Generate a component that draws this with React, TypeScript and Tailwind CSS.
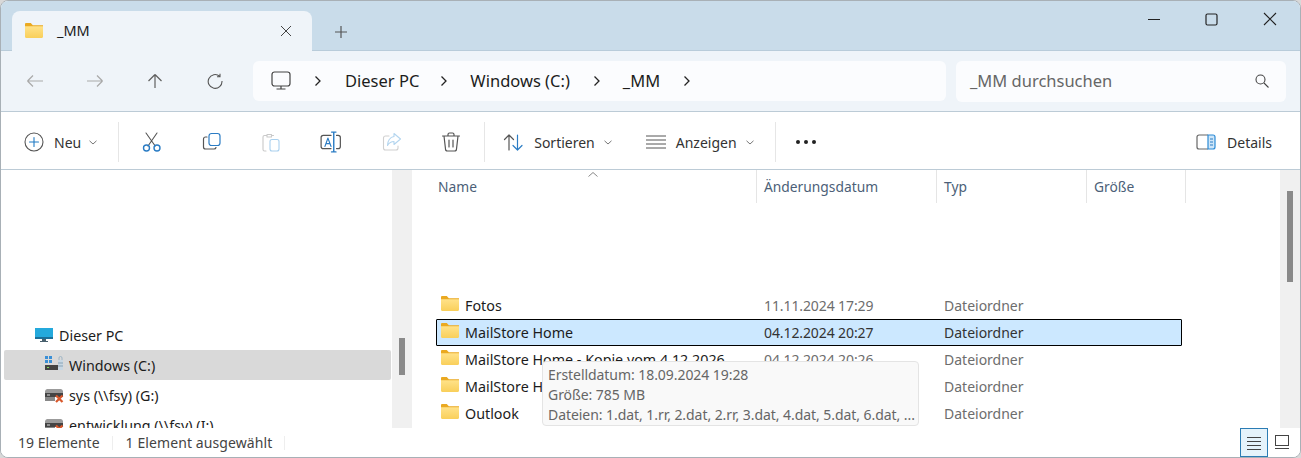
import type { ReactNode } from "react";

type FileRow = {
  name: string;
  date: string;
  selected?: boolean;
};

const files: FileRow[] = [
  { name: "Fotos", date: "11.11.2024 17:29" },
  { name: "MailStore Home", date: "04.12.2024 20:27", selected: true },
  { name: "MailStore Home - Kopie vom 4.12.2026", date: "04.12.2024 20:26" },
  { name: "MailStore Home", date: "" },
  { name: "Outlook", date: "" },
];

const grid = "grid grid-cols-[320px_180px_150px_100px]";

function Svg({ size, className, children }: { size: number; className?: string; children: ReactNode }) {
  return (
    <svg width={size} height={size} viewBox="0 0 20 20" fill="none" strokeWidth="1.1" strokeLinecap="round" strokeLinejoin="round" className={`shrink-0 ${className ?? ""}`}>
      {children}
    </svg>
  );
}

function Folder({ className }: { className?: string }) {
  return (
    <svg width="18" height="15" viewBox="0 0 18 15" className={`shrink-0 ${className ?? ""}`}>
      <defs>
        <linearGradient id="folderBody" x1="0" y1="0" x2="0" y2="1">
          <stop offset="0" stopColor="#ffe289" />
          <stop offset="1" stopColor="#f9cf5a" />
        </linearGradient>
      </defs>
      <path d="M0 1.200C0 .500.500 0 1.200 0h4.600l2 2.200H18V4H0z" fill="#eaa921" />
      <path d="M0 3.200h18v10.600c0 .700-.500 1.200-1.200 1.200H1.200C.500 15 0 14.500 0 13.800z" fill="url(#folderBody)" />
    </svg>
  );
}

function Chevron() {
  return (
    <svg width="8" height="12" viewBox="0 0 8 12" fill="none" stroke="#222" strokeWidth="1.3" className="shrink-0">
      <path d="M1.500 1.500 6 6l-4.500 4.500" />
    </svg>
  );
}

function Caret() {
  return (
    <svg width="8" height="5" viewBox="0 0 8 5" fill="none" stroke="#777" strokeWidth="1" className="shrink-0">
      <path d="M.500.800 4 4 7.500.800" />
    </svg>
  );
}

function Divider() {
  return <div className="h-[40px] w-px bg-[#e6e6e6] shrink-0" />;
}

function TitleBar() {
  return (
    <div className="h-[50px] shrink-0 bg-[#c9dcea] border-b border-[#b9ccda] flex items-end pl-[11px]">
      <div className="w-[300px] h-[40px] bg-[#eff4f9] rounded-t-[8px] flex items-center pl-[13px] pr-[20px] pb-[1px] mb-[-1px] text-[14.500px] text-[#1c1c1c]">
        <Folder />
        <span className="ml-[14px]">_MM</span>
        <svg width="12" height="12" viewBox="0 0 12 12" stroke="#444" strokeWidth="1" className="ml-auto">
          <path d="M1 1l10 10M11 1 1 11" />
        </svg>
      </div>
      <svg width="14" height="14" viewBox="0 0 14 14" stroke="#555" strokeWidth="1.200" className="ml-[22px] mb-[11px]">
        <path d="M7 1v12M1 7h12" />
      </svg>
      <div className="ml-auto flex items-center h-[49px] self-start pr-[23px] pb-[13px]">
        <svg width="14" height="14" viewBox="0 0 14 14" stroke="#222" strokeWidth="1.100">
          <path d="M1 7.500h12" />
        </svg>
        <svg width="13" height="13" viewBox="0 0 13 13" fill="none" stroke="#222" strokeWidth="1.200" className="ml-[44px]">
          <rect x="1" y="1" width="11" height="11" rx="1.500" />
        </svg>
        <svg width="14" height="14" viewBox="0 0 14 14" stroke="#222" strokeWidth="1.100" className="ml-[45px]">
          <path d="M1 1l12 12M13 1 1 13" />
        </svg>
      </div>
    </div>
  );
}

function AddressBar() {
  return (
    <div className="h-[61px] shrink-0 bg-[#eff4f9] border-b border-[#bccbd6] flex items-center pl-[25px] pr-[14px]">
      <svg width="18" height="14" viewBox="0 0 18 14" fill="none" stroke="#a9a9a9" strokeWidth="1.200">
        <path d="M17 7H1.500M1.500 7l5.500-5.500M1.500 7 7 12.500" />
      </svg>
      <svg width="18" height="14" viewBox="0 0 18 14" fill="none" stroke="#a9a9a9" strokeWidth="1.200" className="ml-[42px]">
        <path d="M1 7h15.500M16.500 7 11 1.500M16.500 7 11 12.500" />
      </svg>
      <svg width="16" height="16" viewBox="0 0 16 16" fill="none" stroke="#5f5f5f" strokeWidth="1.200" className="ml-[43px]">
        <path d="M8 15V1.500M8 1.500 1.500 8M8 1.500 14.500 8" />
      </svg>
      <svg width="16" height="16" viewBox="0 0 16 16" fill="none" stroke="#555" strokeWidth="1.100" className="ml-[44px]">
        <path d="M12.600 3.200A6.900 6.900 0 1 0 15 8M13 .800v3h-3" />
      </svg>
      <div className="ml-[30px] w-[693px] h-[40px] bg-[#fbfcfe] rounded-[6px] flex items-center pl-[18px] text-[16.500px] text-[#1c1c1c]">
        <svg width="20" height="20" viewBox="0 0 20 20" fill="none" stroke="#444" strokeWidth="1.200">
          <rect x="1" y="1" width="18" height="14" rx="2.500" />
          <path d="M10 15v3M5.500 18h9" />
        </svg>
        <span className="ml-[23px]"><Chevron /></span>
        <span className="ml-[23px]">Dieser PC</span>
        <span className="ml-[21px]"><Chevron /></span>
        <span className="ml-[22px]">Windows (C:)</span>
        <span className="ml-[23px]"><Chevron /></span>
        <span className="ml-[22px]">_MM</span>
        <span className="ml-[23px]"><Chevron /></span>
      </div>
      <div className="ml-[10px] flex-1 h-[41px] bg-[#fbfcfe] rounded-[6px] flex items-center pl-[14px] pr-[17px] text-[16.500px] text-[#666]">
        <span>_MM durchsuchen</span>
        <svg width="14" height="14" viewBox="0 0 14 14" fill="none" stroke="#444" strokeWidth="1.100" className="ml-auto">
          <circle cx="5.500" cy="5.500" r="4.500" />
          <path d="M9 9l4.500 4.500" />
        </svg>
      </div>
    </div>
  );
}

function Toolbar() {
  return (
    <div className="h-[58px] shrink-0 bg-white border-b border-[#bccbd6] flex items-center pl-[23px] pr-[28px] pt-[3px] text-[14px] text-[#333]">
      <Svg size={20}>
        <circle cx="10" cy="10" r="9" stroke="#555" />
        <path d="M10 5.500v9M5.500 10h9" stroke="#1f7ac4" />
      </Svg>
      <span className="ml-[10px]">Neu</span>
      <span className="ml-[8px]"><Caret /></span>
      <div className="ml-[21px]"><Divider /></div>
      <span className="ml-[23px]">
        <Svg size={20}>
          <path d="M4 1l9.200 13M15 1 6 14" stroke="#555" />
          <circle cx="4.500" cy="16" r="3" stroke="#2b7cc4" strokeWidth="1.400" />
          <circle cx="15" cy="16" r="3" stroke="#2b7cc4" strokeWidth="1.400" />
        </Svg>
      </span>
      <span className="ml-[40px]">
        <Svg size={20}>
          <path d="M5 5H3.500A2 2 0 0 0 1.500 7v8a2 2 0 0 0 2 2H12a2 2 0 0 0 2-1.500" stroke="#555" strokeWidth="1.200" />
          <rect x="7" y="1.500" width="11" height="12" rx="2.500" stroke="#2b7cc4" strokeWidth="1.200" />
        </Svg>
      </span>
      <span className="ml-[39px]">
        <Svg size={20}>
          <path d="M5 19H3.500A1.500 1.500 0 0 1 2 17.500V5a1.500 1.500 0 0 1 1.500-1.500H6M6 2.500h4.500v2.500H6z" stroke="#c9c9c9" />
          <path d="M11 3.500h1.500" stroke="#c9c9c9" />
          <rect x="9" y="7.500" width="9" height="11.500" rx="2" stroke="#a9d0ee" />
        </Svg>
      </span>
      <span className="ml-[39px]">
        <Svg size={22}>
          <path d="M10 4H3a2 2 0 0 0-2 2v8a2 2 0 0 0 2 2h7M15 4h1.500a2 2 0 0 1 2 2v8a2 2 0 0 1-2 2H15" stroke="#555" />
          <path d="M4.500 14 7.200 6.500 10 14M5.500 11.500h3.500" stroke="#2b7cc4" />
          <path d="M12.500 1v18M10.500 1h4M10.500 19h4" stroke="#2b7cc4" strokeWidth="1.300" />
        </Svg>
      </span>
      <span className="ml-[40px]">
        <Svg size={20}>
          <path d="M7 4H3.500A2 2 0 0 0 1.500 6v10a2 2 0 0 0 2 2H14a2 2 0 0 0 2-2v-2" stroke="#d0d0d0" />
          <path d="M12 1.500 18.500 7 12 12.500V9.500C8.500 9.500 7 11 5.500 13.500 5.500 9 8 5 12 4.500z" stroke="#b3d5ef" />
        </Svg>
      </span>
      <span className="ml-[39px]">
        <Svg size={20}>
          <path d="M1.500 4h17M7 4V2.500A1.500 1.500 0 0 1 8.500 1h3A1.500 1.500 0 0 1 13 2.500V4M3 4l1.500 13a2 2 0 0 0 2 2h7a2 2 0 0 0 2-2L17 4M8 8v7M12 8v7" stroke="#555" strokeWidth="1.200" />
        </Svg>
      </span>
      <div className="ml-[23px]"><Divider /></div>
      <span className="ml-[18px]">
        <Svg size={20}>
          <path d="M6 18V3M6 3 1.500 7.500M6 3l4.500 4.500" stroke="#555" strokeWidth="1.200" />
          <path d="M14.500 3v15M14.500 18 10 13.500M14.500 18l4.500-4.500" stroke="#2b7cc4" strokeWidth="1.200" />
        </Svg>
      </span>
      <span className="ml-[11px]">Sortieren</span>
      <span className="ml-[9px]"><Caret /></span>
      <span className="ml-[34px]">
        <Svg size={20}>
          <path d="M0 4h20M0 8h20M0 12h20M0 16h20" stroke="#555" strokeWidth="1" />
        </Svg>
      </span>
      <span className="ml-[10px]">Anzeigen</span>
      <span className="ml-[9px]"><Caret /></span>
      <div className="ml-[21px]"><Divider /></div>
      <div className="ml-[20px] flex gap-[4px]">
        <span className="w-[4px] h-[4px] rounded-full bg-[#222]" />
        <span className="w-[4px] h-[4px] rounded-full bg-[#222]" />
        <span className="w-[4px] h-[4px] rounded-full bg-[#222]" />
      </div>
      <svg width="20" height="16" viewBox="0 0 20 16" fill="none" className="ml-auto">
        <path d="M12 1H3a2 2 0 0 0-2 2v10a2 2 0 0 0 2 2h9" stroke="#666" strokeWidth="1.200" />
        <path d="M12 1h5a2 2 0 0 1 2 2v10a2 2 0 0 1-2 2h-5z" stroke="#2b8ad6" strokeWidth="1.200" fill="#cfe6f8" />
        <path d="M14 5h3M14 8h3M14 11h3" stroke="#2b7cc4" />
      </svg>
      <span className="ml-[11px]">Details</span>
    </div>
  );
}

function DriveIcon({ windows }: { windows?: boolean }) {
  return (
    <svg width="20" height="18" viewBox="0 0 20 18" className="shrink-0">
      {windows ? (
        <>
          <path d="M1 0h3v3H1zM5 0h3v3H5zM1 4h3v3H1zM5 4h3v3H5z" fill="#3a8fd6" />
          <path d="M1 9h13v5H1z" fill="#444" />
          <path d="M3 11h2v1H3z" fill="#7ed957" />
          <path d="M14 4h5v10h-5z" fill="#c8d8e4" />
          <path d="M15 4V2a1.500 1.500 0 0 1 3 0v2" stroke="#9fb4c4" fill="none" />
          <path d="M14 7h5M14 10h5" stroke="#8aa4b6" />
        </>
      ) : (
        <>
          <path d="M1 5c1-2 2-2 3-2h12c1 0 2 0 3 2v2H1z" fill="#9b9b9b" />
          <path d="M1 7h18v4H1z" fill="#444" />
          <path d="M3 8.500h3v1H3z" fill="#ddd" />
          <path d="M1 11h10v4H1z" fill="#888" />
          <path d="M12 9.500l6.500 6.500M18.500 9.500 12 16" stroke="#d8582c" strokeWidth="2.200" />
        </>
      )}
    </svg>
  );
}

function NavPane() {
  return (
    <div className="w-[411px] shrink-0 flex">
      <div className="w-[387px] shrink-0 ml-[3px] pt-[150px] text-[14.300px] text-[#1c1c1c] overflow-hidden">
        <div className="h-[30px] flex items-center pl-[31px]">
          <svg width="18" height="15" viewBox="0 0 18 15" className="shrink-0">
            <path d="M0 0h18v11H0z" fill="#24a9dc" />
            <path d="M0 9h18v2H0z" fill="#1b6f99" />
            <path d="M7 11h4v2H7zM5 13h8v1H5z" fill="#49616e" />
          </svg>
          <span className="ml-[6px] pt-[2px]">Dieser PC</span>
        </div>
        <div className="h-[30px] flex items-center pl-[40px] bg-[#d9d9d9] rounded-[2px]">
          <DriveIcon windows />
          <span className="ml-[5px] pt-[2px]">Windows (C:)</span>
        </div>
        <div className="h-[30px] flex items-center pl-[40px]">
          <DriveIcon />
          <span className="ml-[5px] pt-[2px]">sys (\\fsy) (G:)</span>
        </div>
        <div className="h-[30px] flex items-center pl-[40px]">
          <DriveIcon />
          <span className="ml-[5px] pt-[2px]">entwicklung (\\fsy) (I:)</span>
        </div>
      </div>
      <div className="w-[20px] ml-auto bg-[#f0f0f0] pl-[7px] pt-[168px]">
        <div className="w-[6px] h-[37px] bg-[#8a8a8a]" />
      </div>
    </div>
  );
}

function FileList() {
  return (
    <div className="flex-1 relative pl-[24px] overflow-hidden text-[14px]">
      <div className={`${grid} h-[33px] text-[#4c5f78] text-[13.800px] relative`}>
        <div className="pl-[2px] pt-[7px]">Name</div>
        <div className="pl-[7px] pt-[7px] border-l border-[#e5e5e5]">Änderungsdatum</div>
        <div className="pl-[7px] pt-[7px] border-l border-[#e5e5e5]">Typ</div>
        <div className="pl-[7px] pt-[7px] border-l border-r border-[#e5e5e5]">Größe</div>
        <svg width="10" height="5" viewBox="0 0 10 5" fill="none" stroke="#888" className="absolute left-[152px] top-[2px]">
          <path d="M.500 4.500 5 .500l4.500 4" />
        </svg>
      </div>
      <div className="pt-[89px] w-[746px]">
        {files.map((f) => (
          <div
            key={f.name + f.date}
            className={`${grid} h-[27px] items-center ${f.selected ? "bg-[#cce8ff] outline outline-1 -outline-offset-1 outline-black rounded-[1px]" : ""}`}
          >
            <div className="flex items-center pl-[5px] text-[#1c1c1c] text-[14.300px]">
              <Folder className="-mt-[4px]" />
              <span className="ml-[6px] whitespace-nowrap">{f.name}</span>
            </div>
            <div className={`pl-[8px] tracking-[-0.1px] ${f.selected ? "text-[#333]" : "text-[#6d6d6d]"}`}>{f.date}</div>
            <div className={`pl-[8px] ${f.selected ? "text-[#333]" : "text-[#6d6d6d]"}`}>Dateiordner</div>
            <div />
          </div>
        ))}
      </div>
      {/* tooltip over the rows */}
      <div className="absolute left-[130px] top-[191px] w-[377px] h-[65px] bg-[#f9f9f9] border border-[#e4e4e4] rounded-[4px] pl-[5px] pt-[3px] text-[14px] tracking-[-0.06px] leading-[20px] text-[#666]">
        <div>Erstelldatum: 18.09.2024 19:28</div>
        <div>Größe: 785 MB</div>
        <div className="whitespace-nowrap">Dateien: 1.dat, 1.rr, 2.dat, 2.rr, 3.dat, 4.dat, 5.dat, 6.dat, ...</div>
      </div>
    </div>
  );
}

function StatusBar() {
  return (
    <div className="h-[29px] shrink-0 bg-white flex items-center pl-[17px] pr-[11px] text-[14px] text-[#444]">
      <span>19 Elemente</span>
      <div className="ml-[12px] w-px h-[14px] bg-[#eeeeee]" />
      <span className="ml-[13px] tracking-[0.1px]">1 Element ausgewählt</span>
      <div className="ml-[12px] w-px h-[14px] bg-[#eeeeee]" />
      <div className="ml-auto w-[28px] h-[29px] bg-[#e5f3fb] border border-[#2b7cb4] flex items-center justify-center">
        <svg width="14" height="14" viewBox="0 0 14 14" stroke="#444" strokeWidth="1">
          <path d="M0 1.500h14M0 5.500h14M0 9.500h14M0 13.500h14" />
        </svg>
      </div>
      <svg width="14" height="14" viewBox="0 0 14 14" fill="none" stroke="#444" strokeWidth="1" className="ml-[7px] -mt-[2px]">
        <rect x=".5" y=".5" width="13" height="10" />
        <path d="M0 13.500h14" />
      </svg>
    </div>
  );
}

export default function App() {
  return (
    <div className="w-[1301px] h-[458px] bg-[#d8d8d8] overflow-hidden [font-family:'Noto_Sans',sans-serif]">
      <div className="w-full h-full flex flex-col bg-white border border-[#a8b0b6] rounded-[8px] overflow-hidden">
        <TitleBar />
        <AddressBar />
        <Toolbar />
        <div className="h-[258px] shrink-0 flex">
          <NavPane />
          <FileList />
          <div className="w-[20px] shrink-0 bg-[#f0f0f0] pl-[7px] pt-[21px]">
            <div className="w-[6px] h-[91px] bg-[#8a8a8a]" />
          </div>
        </div>
        <StatusBar />
      </div>
    </div>
  );
}
